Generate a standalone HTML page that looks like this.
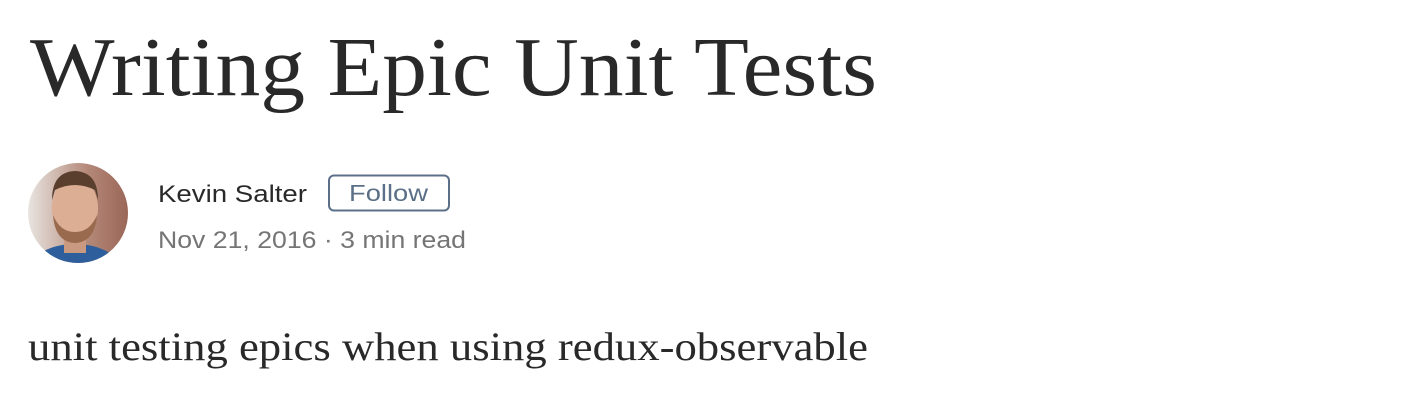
<!DOCTYPE html>
<html><head><meta charset="utf-8"><style>
html,body{margin:0;padding:0;background:#fff;width:1418px;height:412px;overflow:hidden}
svg{display:block}
</style></head><body>
<svg width="1418" height="412" viewBox="0 0 1418 412" xmlns="http://www.w3.org/2000/svg">
<defs>
<clipPath id="c"><circle cx="78" cy="213" r="50"/></clipPath>
<linearGradient id="bg" x1="0" x2="1"><stop offset="0" stop-color="#e8e4e0"/><stop offset="0.6" stop-color="#b48878"/><stop offset="1" stop-color="#9a6658"/></linearGradient>
</defs>
<text x="30" y="95" font-family="Liberation Serif, serif" font-size="84" fill="#292929" textLength="847" lengthAdjust="spacingAndGlyphs">Writing Epic Unit Tests</text>
<g clip-path="url(#c)">
<rect x="28" y="163" width="100" height="100" fill="url(#bg)"/>
<ellipse cx="75" cy="276" rx="50" ry="32" fill="#2e5f9c"/>
<rect x="64" y="235" width="22" height="18" fill="#c99a80"/>
<ellipse cx="75" cy="208" rx="23" ry="30" fill="#dcae94"/>
<path d="M52 200 Q52 172 75 171 Q98 172 98 200 L95 190 Q75 180 55 190 Z" fill="#5a3e2e"/>
<path d="M53 215 Q55 242 75 243 Q95 242 97 215 Q90 232 75 232 Q60 232 53 215 Z" fill="#9a6a4e"/>
</g>
<text x="158" y="202" font-family="Liberation Sans, sans-serif" font-size="24" fill="#292929" textLength="149" lengthAdjust="spacingAndGlyphs">Kevin Salter</text>
<rect x="329" y="175.5" width="120" height="35" rx="5" fill="none" stroke="#5b7088" stroke-width="2"/>
<text x="349" y="201" font-family="Liberation Sans, sans-serif" font-size="23" fill="#5b7088" textLength="79" lengthAdjust="spacingAndGlyphs">Follow</text>
<text x="158" y="248" font-family="Liberation Sans, sans-serif" font-size="24" fill="#757575" textLength="308" lengthAdjust="spacingAndGlyphs">Nov 21, 2016 · 3 min read</text>
<text x="28" y="360" font-family="Liberation Serif, serif" font-size="40" fill="#292929" textLength="840" lengthAdjust="spacingAndGlyphs">unit testing epics when using redux-observable</text>
</svg>
</body></html>
